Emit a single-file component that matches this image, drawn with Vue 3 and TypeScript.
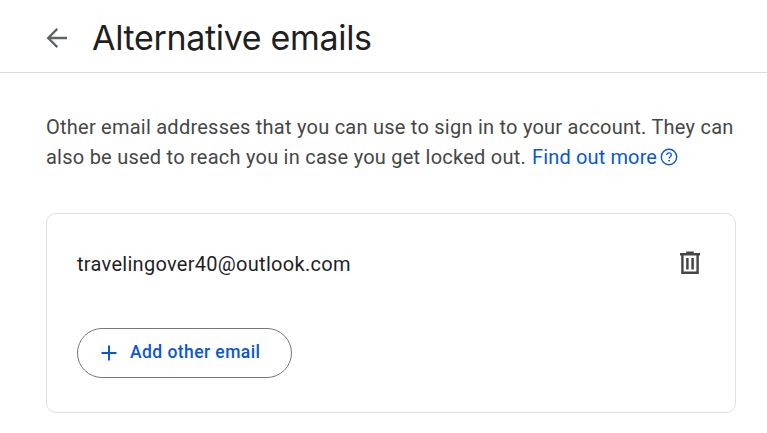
<script setup lang="ts">
import { ref } from 'vue'

const emails = ref<string[]>(['travelingover40@outlook.com'])
</script>

<template>
  <main class="page">
    <header class="topbar">
      <button class="icon-button" aria-label="Back">
        <svg width="22" height="22" viewBox="0 0 22 22" fill="none" stroke="#5f6368" stroke-width="2.3">
          <path d="M21 11H2.8M11.3 1.9L2.2 11l9.1 9.1" />
        </svg>
      </button>
      <h1 class="title">Alternative emails</h1>
    </header>

    <section class="content">
      <p class="intro">
        <span class="line">Other email addresses that you can use to sign in to your account. They can</span>
        <span class="line">
          <span>also be used to reach you in case you get locked out.</span>
          <a class="link">Find out more</a>
          <svg class="help" width="18" height="18" viewBox="0 0 18 18" fill="none" stroke="#0b57d0">
            <circle cx="9" cy="9" r="7.7" stroke-width="1.4" />
            <path d="M6.7 7.1c0-1.4 1-2.2 2.3-2.2s2.3.9 2.3 2c0 1.7-2.2 1.8-2.2 3.6" stroke-width="1.3" />
            <path d="M9.1 11.9v1.5" stroke-width="1.6" />
          </svg>
        </span>
      </p>

      <div class="card">
        <div v-for="email in emails" :key="email" class="row">
          <span class="email">{{ email }}</span>
          <button class="icon-button trash" aria-label="Delete">
            <svg width="20" height="24" viewBox="0 0 20 24" fill="none" stroke="#444746">
              <path d="M0 3.2h20M6.2 1.6h7.6" stroke-width="2.4" />
              <path d="M2.4 3.2v18.6h15.2V3.2" stroke-width="2.4" />
              <path d="M7.4 7v11.5M12.6 7v11.5" stroke-width="2.5" />
            </svg>
          </button>
        </div>
        <button class="add">
          <svg width="16" height="16" viewBox="0 0 16 16" stroke="#0b57d0" stroke-width="2">
            <path d="M8 .5v15M.5 8h15" />
          </svg>
          <span class="add-label">Add other email</span>
        </button>
      </div>
    </section>
  </main>
</template>

<style>
body {
  background: #fff;
}
</style>

<style scoped>
.page {
  height: 433px;
  overflow: hidden;
  background: #fff;
  color: #1f1f1f;
  font-family: Roboto, "Liberation Sans", sans-serif;
}
.topbar {
  box-sizing: border-box;
  display: flex;
  align-items: center;
  gap: 24px;
  height: 73px;
  padding: 4px 0 0 46px;
  border-bottom: 1px solid #dadce0;
}
.icon-button {
  display: flex;
  padding: 0;
  border: 0;
  background: none;
}
.title {
  margin: 0;
  font-family: Inter, sans-serif;
  font-size: 34px;
  line-height: 44px;
  font-weight: 400;
  letter-spacing: -0.33px;
  white-space: nowrap;
}
.content {
  padding: 39px 31px 0 46px;
}
.intro {
  margin: 0;
  color: #444746;
  font-size: 20px;
  line-height: 30px;
  letter-spacing: 0.24px;
  white-space: nowrap;
}
.line {
  display: flex;
  align-items: center;
}
.link {
  margin-left: 6px;
  color: #0b57d0;
  letter-spacing: 0.14px;
}
.help {
  margin-left: 3px;
}
.card {
  box-sizing: border-box;
  height: 200px;
  margin-top: 41px;
  padding: 35px 35px 0 30px;
  border: 1px solid #dfe1e5;
  border-radius: 10px;
}
.row {
  display: flex;
  align-items: center;
  justify-content: space-between;
  height: 30px;
}
.email {
  font-size: 20px;
  letter-spacing: 0.29px;
}
.trash {
  padding-bottom: 2px;
}
.add {
  box-sizing: border-box;
  display: flex;
  align-items: center;
  gap: 13px;
  width: 215px;
  height: 50px;
  margin-top: 49px;
  padding: 0 0 0 23px;
  border: 1px solid #747775;
  border-radius: 25px;
  background: #fff;
  color: #0b57d0;
  font-family: inherit;
  font-size: 17.5px;
  font-weight: 500;
  letter-spacing: 0.43px;
  white-space: nowrap;
}
.add-label {
  padding-bottom: 2px;
}
</style>
